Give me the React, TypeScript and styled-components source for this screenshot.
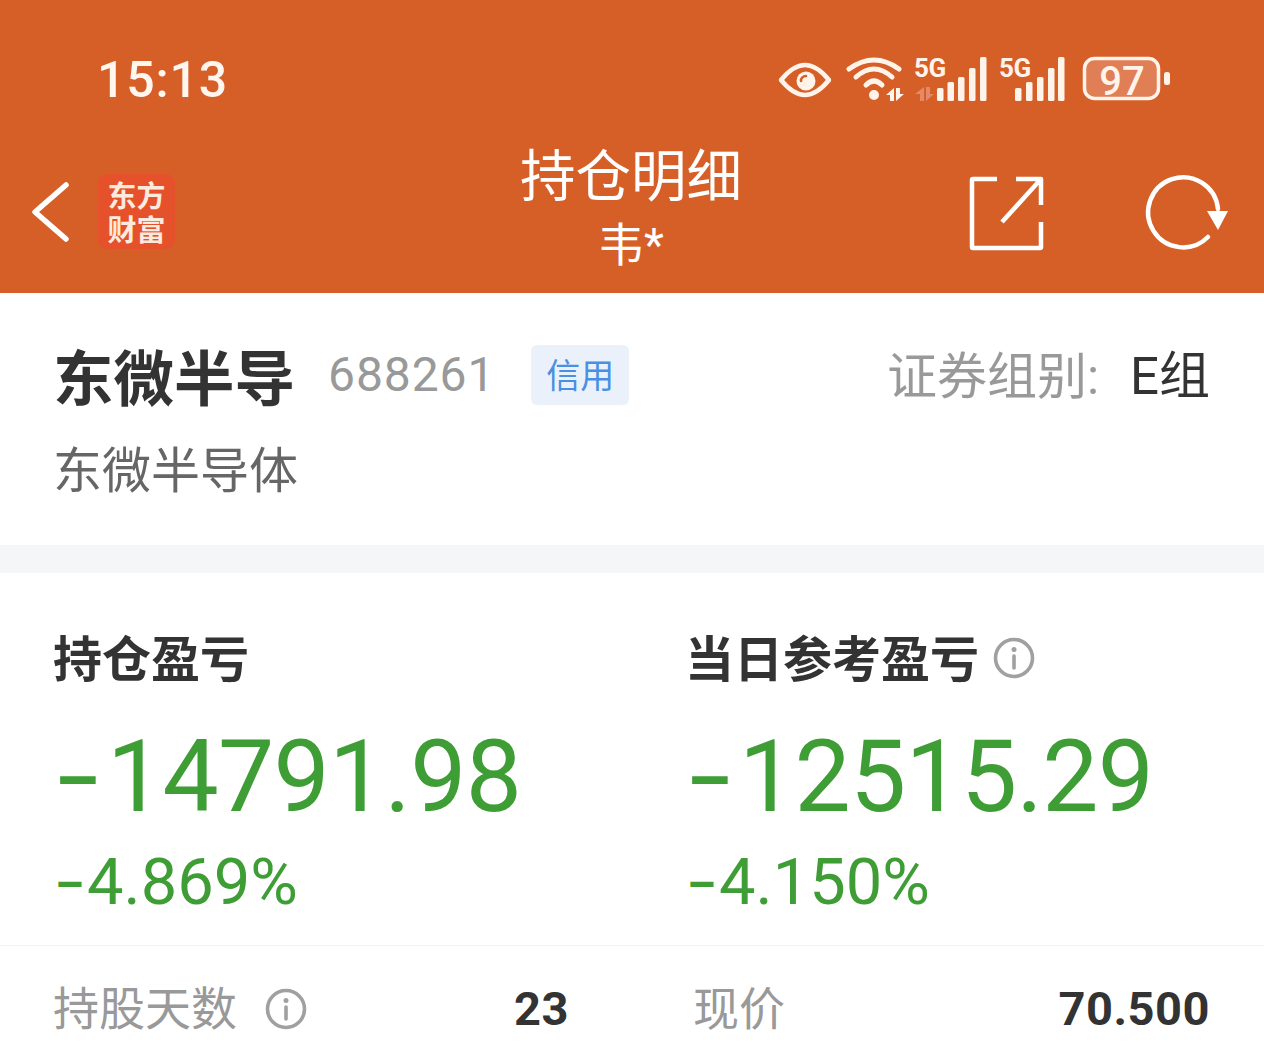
import React from 'react';
import styled, { createGlobalStyle } from 'styled-components';

const GlobalStyle = createGlobalStyle`
  html, body {
    margin: 0;
    padding: 0;
    background: #fff;
    overflow: hidden;
  }
  * {
    box-sizing: border-box;
  }
`;

const CJK = `Roboto, "Noto Sans CJK SC", sans-serif`;
const ORANGE = '#D65F28';
const GREEN = '#3F9D36';
const ICON = '#FFF3EA';

const Page = styled.div`
  width: 1264px;
  height: 1057px;
  overflow: hidden;
  font-family: ${CJK};
  background: #fff;
`;

const Header = styled.header`
  height: 293px;
  background: ${ORANGE};
  color: #fff;
`;

const StatusBar = styled.div`
  height: 130px;
  padding: 30px 92px 0 97px;
  display: flex;
  align-items: center;
  justify-content: space-between;
`;

const Clock = styled.div`
  font-size: 50px;
  font-weight: 500;
  letter-spacing: 0.8px;
  color: #fff6f0;
`;

const NavBar = styled.div`
  height: 163px;
  padding: 0 36px 0 30px;
  display: grid;
  grid-template-columns: 1fr auto 1fr;
  align-items: center;
`;

const NavLeft = styled.div`
  display: flex;
  align-items: center;
  gap: 26px;
`;

const NavRight = styled.div`
  display: flex;
  align-items: center;
  justify-content: flex-end;
  gap: 101px;
  padding-top: 4px;
`;

const Logo = styled.div`
  width: 77px;
  height: 75px;
  border-radius: 9px;
  background: #E5512A;
  color: #fdeadf;
  padding-top: 6px;
`;

const LogoLine = styled.div`
  height: 34px;
  font-size: 29px;
  font-weight: 700;
  line-height: 34px;
  text-align: center;
`;

const TitleBlock = styled.div`
  text-align: center;
  padding: 0 0 8px 4px;
`;

const Title = styled.div`
  font-size: 55.5px;
  line-height: 70px;
  margin-bottom: 4px;
`;

const Subtitle = styled.div`
  font-size: 46px;
  line-height: 56px;
`;

const StockCard = styled.section`
  height: 252px;
  padding: 46px 54px 0 53px;
`;

const StockRow = styled.div`
  display: flex;
  align-items: center;
  height: 70px;
`;

const StockName = styled.div`
  font-size: 60.5px;
  font-weight: 700;
  color: #333;
`;

const StockCode = styled.div`
  font-size: 48px;
  color: #999;
  margin-left: 33px;
  letter-spacing: 0.9px;
`;

const Tag = styled.div`
  width: 98px;
  height: 60px;
  margin: 2px 0 0 36px;
  padding-bottom: 4px;
  border-radius: 6px;
  background: #EAF1FB;
  color: #4A90E2;
  font-size: 34px;
  display: flex;
  align-items: center;
  justify-content: center;
`;

const Group = styled.div`
  margin: 0 0 4px auto;
  font-size: 50px;
  color: #999;
`;

const GroupValue = styled.span`
  color: #333;
  font-size: 51px;
  margin-left: 31px;
`;

const FullName = styled.div`
  font-size: 49px;
  line-height: 70px;
  margin-top: 28px;
  color: #666;
`;

const Band = styled.div`
  height: 28px;
  background: #F5F6F8;
`;

const ProfitGrid = styled.section`
  height: 373px;
  padding: 50px 0 0 55px;
  display: grid;
  grid-template-columns: 632px 1fr;
  border-bottom: 1px solid #f3f3f3;
`;

const ProfitLabel = styled.div`
  display: flex;
  align-items: center;
  gap: 14px;
  height: 70px;
  margin: -3px 0 3px -2px;
  font-size: 49px;
  font-weight: 700;
  color: #333;
`;

const LabelInfo = styled.span`
  display: flex;
  padding-top: 6px;
`;

const ProfitValue = styled.div`
  font-size: 100px;
  line-height: 116px;
  letter-spacing: -0.7px;
  margin-top: 29px;
  color: ${GREEN};
`;

const ProfitRate = styled.div`
  font-size: 65px;
  line-height: 76px;
  margin-top: 9px;
  color: ${GREEN};
`;

// the app draws a long flat minus, wider than a Roboto hyphen
const Sign = styled.span<{ $width: number; $lift: number }>`
  display: inline-block;
  width: ${props => props.$width}px;
  font-size: 0.7em;
  font-weight: 700;
  line-height: 1;
  vertical-align: ${props => props.$lift}px;
`;

const DetailRow = styled.div`
  height: 111px;
  padding: 14px 54px 0 53px;
  display: grid;
  grid-template-columns: 516px 1fr;
  column-gap: 124px;
  align-items: center;
`;

const DetailCell = styled.div`
  display: flex;
  align-items: center;
  justify-content: space-between;
`;

const DetailLabel = styled.div`
  display: flex;
  align-items: center;
  gap: 28px;
  font-size: 46px;
  color: #999;
`;

const DetailLabelText = styled.span`
  margin-top: -8px;
`;

const DetailValue = styled.div`
  font-size: 47px;
  font-weight: 700;
  letter-spacing: 0.5px;
  color: #333;
  text-align: right;
`;

const InfoIcon = ({ size }: { size: number }) => (
  <svg width={size} height={size} viewBox="0 0 42 42" fill="none">
    <circle cx="21" cy="21" r="18.5" stroke="#A0A0A0" strokeWidth="3.6" />
    <circle cx="21" cy="12.5" r="2.5" fill="#A0A0A0" />
    <path d="M21 19v12" stroke="#A0A0A0" strokeWidth="3.6" strokeLinecap="round" />
  </svg>
);

const Bars = ({ xs }: { xs: number[] }) => {
  const tops = [36, 30, 25, 16, 5];
  return (
    <g fill={ICON}>
      {xs.map((x, i) => (
        <rect key={x} x={x} y={tops[i]} width="6.5" height={49 - tops[i]} rx="1.5" />
      ))}
    </g>
  );
};

const FiveG = ({ x }: { x: number }) => (
  <text x={x} y="25" fontFamily="Roboto, sans-serif" fontSize="26" fontWeight="700" fill={ICON} letterSpacing="-0.5">5G</text>
);

const StatusIcons = () => (
  <svg width="394" height="56" viewBox="0 0 394 56" fill="none">
    {/* eye */}
    <path d="M3 28C12 17 20 13 27 13s15 4 24 15C42 39 34 43 27 43S12 39 3 28Z" stroke={ICON} strokeWidth="4.5" strokeLinejoin="round" />
    <circle cx="28" cy="29" r="9.5" fill={ICON} />
    <path d="M23 29c0-3 2-5 5-5" stroke={ORANGE} strokeWidth="2.6" strokeLinecap="round" />
    {/* wifi */}
    <g stroke={ICON} strokeWidth="5" strokeLinecap="round">
      <path d="M71 17Q96 -1 121 17" />
      <path d="M78 25Q96 9 114 25" />
      <path d="M88 33Q96 25 104 33" />
    </g>
    <circle cx="96" cy="43" r="5" fill={ICON} />
    <path d="M116 36l-8 7h4v6h4ZM118 36h4v6h4l-8 7Z" fill={ICON} />
    {/* sim 1 */}
    <FiveG x={136} />
    <path d="M146 35l-9 7h5v7h4ZM148 35h4v7h4l-8 7Z" fill="#E58A66" />
    <Bars xs={[159, 169.5, 180, 191, 202]} />
    {/* sim 2 */}
    <FiveG x={221} />
    <Bars xs={[237, 248, 259, 270, 280]} />
    {/* battery */}
    <rect x="306.5" y="6.5" width="74" height="40" rx="10" fill="#E07E55" stroke={ICON} strokeWidth="3.5" />
    <text x="344" y="43" textAnchor="middle" fontFamily="Roboto, sans-serif" fontSize="40" fontWeight="500" fill={ICON}>97</text>
    <rect x="386" y="20" width="6" height="13" rx="2.5" fill={ICON} />
  </svg>
);

const BackIcon = () => (
  <svg width="42" height="66" viewBox="0 0 42 66" fill="none">
    <path d="M36 6L5 33l31 27" stroke="#fff" strokeWidth="5.5" strokeLinecap="round" strokeLinejoin="round" />
  </svg>
);

const ShareIcon = () => (
  <svg width="76" height="76" viewBox="0 0 76 76" fill="none">
    <path d="M28 3H4a1 1 0 0 0-1 1v67a1 1 0 0 0 1 1h67a1 1 0 0 0 1-1V46M47 3h25v26M72 3L33 46" stroke="#fff" strokeWidth="4.5" strokeLinejoin="round" />
  </svg>
);

const RefreshIcon = () => (
  <svg width="82" height="76" viewBox="0 0 82 76" fill="none" overflow="visible">
    <path d="M62 61A35 35 0 1 1 72 33" stroke="#fff" strokeWidth="4.5" strokeLinecap="round" />
    <path d="M61 35h21L72 54Z" fill="#fff" />
  </svg>
);

export default function App() {
  return (
    <Page>
      <GlobalStyle />
      <Header>
        <StatusBar>
          <Clock>15:13</Clock>
          <StatusIcons />
        </StatusBar>
        <NavBar>
          <NavLeft>
            <BackIcon />
            <Logo>
              <LogoLine>东方</LogoLine>
              <LogoLine>财富</LogoLine>
            </Logo>
          </NavLeft>
          <TitleBlock>
            <Title>持仓明细</Title>
            <Subtitle>韦*</Subtitle>
          </TitleBlock>
          <NavRight>
            <ShareIcon />
            <RefreshIcon />
          </NavRight>
        </NavBar>
      </Header>

      <StockCard>
        <StockRow>
          <StockName>东微半导</StockName>
          <StockCode>688261</StockCode>
          <Tag>信用</Tag>
          <Group>证券组别:<GroupValue>E组</GroupValue></Group>
        </StockRow>
        <FullName>东微半导体</FullName>
      </StockCard>

      <Band />

      <ProfitGrid>
        <div>
          <ProfitLabel>持仓盈亏</ProfitLabel>
          <ProfitValue><Sign $width={52} $lift={6}>–</Sign>14791.98</ProfitValue>
          <ProfitRate><Sign $width={32} $lift={3}>–</Sign>4.869%</ProfitRate>
        </div>
        <div>
          <ProfitLabel>当日参考盈亏<LabelInfo><InfoIcon size={42} /></LabelInfo></ProfitLabel>
          <ProfitValue><Sign $width={52} $lift={6}>–</Sign>12515.29</ProfitValue>
          <ProfitRate><Sign $width={32} $lift={3}>–</Sign>4.150%</ProfitRate>
        </div>
      </ProfitGrid>

      <DetailRow>
        <DetailCell>
          <DetailLabel><DetailLabelText>持股天数</DetailLabelText><InfoIcon size={42} /></DetailLabel>
          <DetailValue>23</DetailValue>
        </DetailCell>
        <DetailCell>
          <DetailLabel><DetailLabelText>现价</DetailLabelText></DetailLabel>
          <DetailValue>70.500</DetailValue>
        </DetailCell>
      </DetailRow>
    </Page>
  );
}
